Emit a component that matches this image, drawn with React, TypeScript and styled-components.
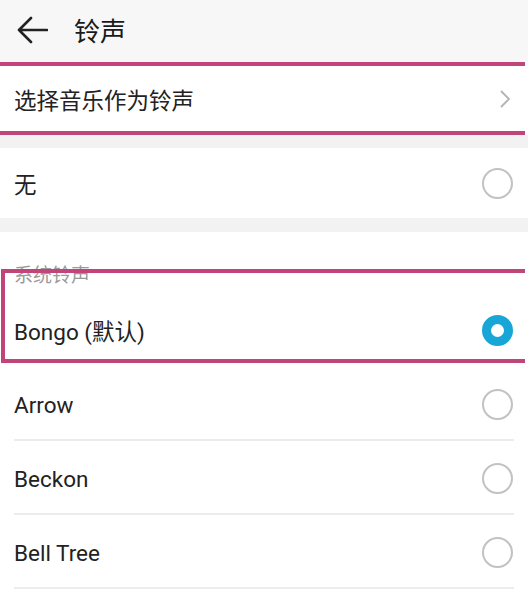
import React from "react";
import styled, { createGlobalStyle, css } from "styled-components";

const Global = createGlobalStyle`
  html, body { margin: 0; padding: 0; background: #ffffff; }
  body { font-family: Roboto, "Noto Sans CJK SC", "Noto Sans", sans-serif; }
  * { box-sizing: border-box; }
`;

const Page = styled.div`
  width: 528px;
  height: 602px;
  overflow: hidden;
  background: #ffffff;
  position: relative;
  display: flex;
  flex-direction: column;
`;

const Header = styled.header`
  height: 62px;
  flex: none;
  background: #f7f7f7;
  display: flex;
  align-items: center;
  padding-left: 15px;
  gap: 25px;
`;

const BackButton = styled.div`
  width: 34px;
  height: 30px;
  display: flex;
  align-items: center;
  justify-content: center;
  margin-bottom: 2px;
`;

const Title = styled.h1`
  margin: 0;
  font-family: "Noto Sans CJK SC", sans-serif;
  font-size: 26px;
  font-weight: 400;
  color: #1a1a1a;
  margin-bottom: 4px;
`;

const Highlight = styled.div<{ $top: number; $bottom: number; $left?: boolean }>`
  position: relative;
  flex: none;
  &::after {
    content: "";
    position: absolute;
    top: ${(p) => p.$top}px;
    bottom: ${(p) => p.$bottom}px;
    left: ${(p) => (p.$left ? 1 : 0)}px;
    right: 3px;
    border-top: 4px solid #c1447a;
    border-bottom: 4px solid #c1447a;
    ${(p) =>
      p.$left &&
      css`
        border-left: 4px solid #c1447a;
      `}
    pointer-events: none;
  }
`;

const Gap = styled.div<{ $h: number }>`
  height: ${(p) => p.$h}px;
  flex: none;
  background: #f2f2f2;
`;

const Row = styled.div<{ $h: number }>`
  height: ${(p) => p.$h}px;
  flex: none;
  background: #ffffff;
  padding-left: 14px;
  display: flex;
`;

const RowInner = styled.div<{ $divider?: boolean }>`
  flex: 1;
  margin-right: 14px;
  display: flex;
  align-items: center;
  justify-content: space-between;
  ${(p) =>
    p.$divider &&
    css`
      padding-top: 3px;
      border-bottom: 2px solid #ececec;
    `}
`;

const Label = styled.span`
  font-family: Roboto, "Noto Sans CJK SC", sans-serif;
  font-size: 22.5px;
  color: #222222;
`;

const SectionHead = styled.div`
  height: 61px;
  padding: 0 14px 6px;
  display: flex;
  align-items: flex-end;
  font-family: "Noto Sans CJK SC", sans-serif;
  font-size: 19px;
  color: #9a9a9a;
  background: #ffffff;
`;

const Radio = styled.span<{ $on?: boolean }>`
  width: 31px;
  height: 31px;
  border-radius: 50%;
  flex: none;
  margin-right: 1px;
  ${(p) =>
    p.$on
      ? css`
          border: 9px solid #17a6d6;
          background: #ffffff;
        `
      : css`
          border: 2px solid #c2c2c2;
        `}
`;

const Chevron = styled.svg`
  margin-right: 2px;
`;

const ringtones = ["Arrow", "Beckon", "Bell Tree"];

export default function App() {
  return (
    <Page>
      <Global />
      <Header>
        <BackButton>
          <svg width="32" height="28" viewBox="0 0 32 28">
            <path
              d="M31 14 H3 M15 2 L3 14 L15 26"
              fill="none"
              stroke="#222"
              strokeWidth="2.6"
              strokeLinecap="round"
              strokeLinejoin="round"
            />
          </svg>
        </BackButton>
        <Title>铃声</Title>
      </Header>

      <Highlight $top={0} $bottom={0}>
        <Row $h={73}>
          <RowInner>
            <Label>选择音乐作为铃声</Label>
            <Chevron width="14" height="20" viewBox="0 0 14 20">
              <path d="M3 2 L11 10 L3 18" fill="none" stroke="#b3b3b3" strokeWidth="1.8" />
            </Chevron>
          </RowInner>
        </Row>
      </Highlight>

      <Gap $h={13} />

      <Row $h={70}>
        <RowInner>
          <Label>无</Label>
          <Radio />
        </RowInner>
      </Row>

      <Gap $h={14} />

      <Highlight $top={37} $bottom={4} $left>
        <SectionHead>系统铃声</SectionHead>
        <Row $h={74}>
          <RowInner>
            <Label>Bongo (默认)</Label>
            <Radio $on />
          </RowInner>
        </Row>
      </Highlight>

      {ringtones.map((name) => (
        <Row key={name} $h={74}>
          <RowInner $divider>
            <Label>{name}</Label>
            <Radio />
          </RowInner>
        </Row>
      ))}
    </Page>
  );
}
